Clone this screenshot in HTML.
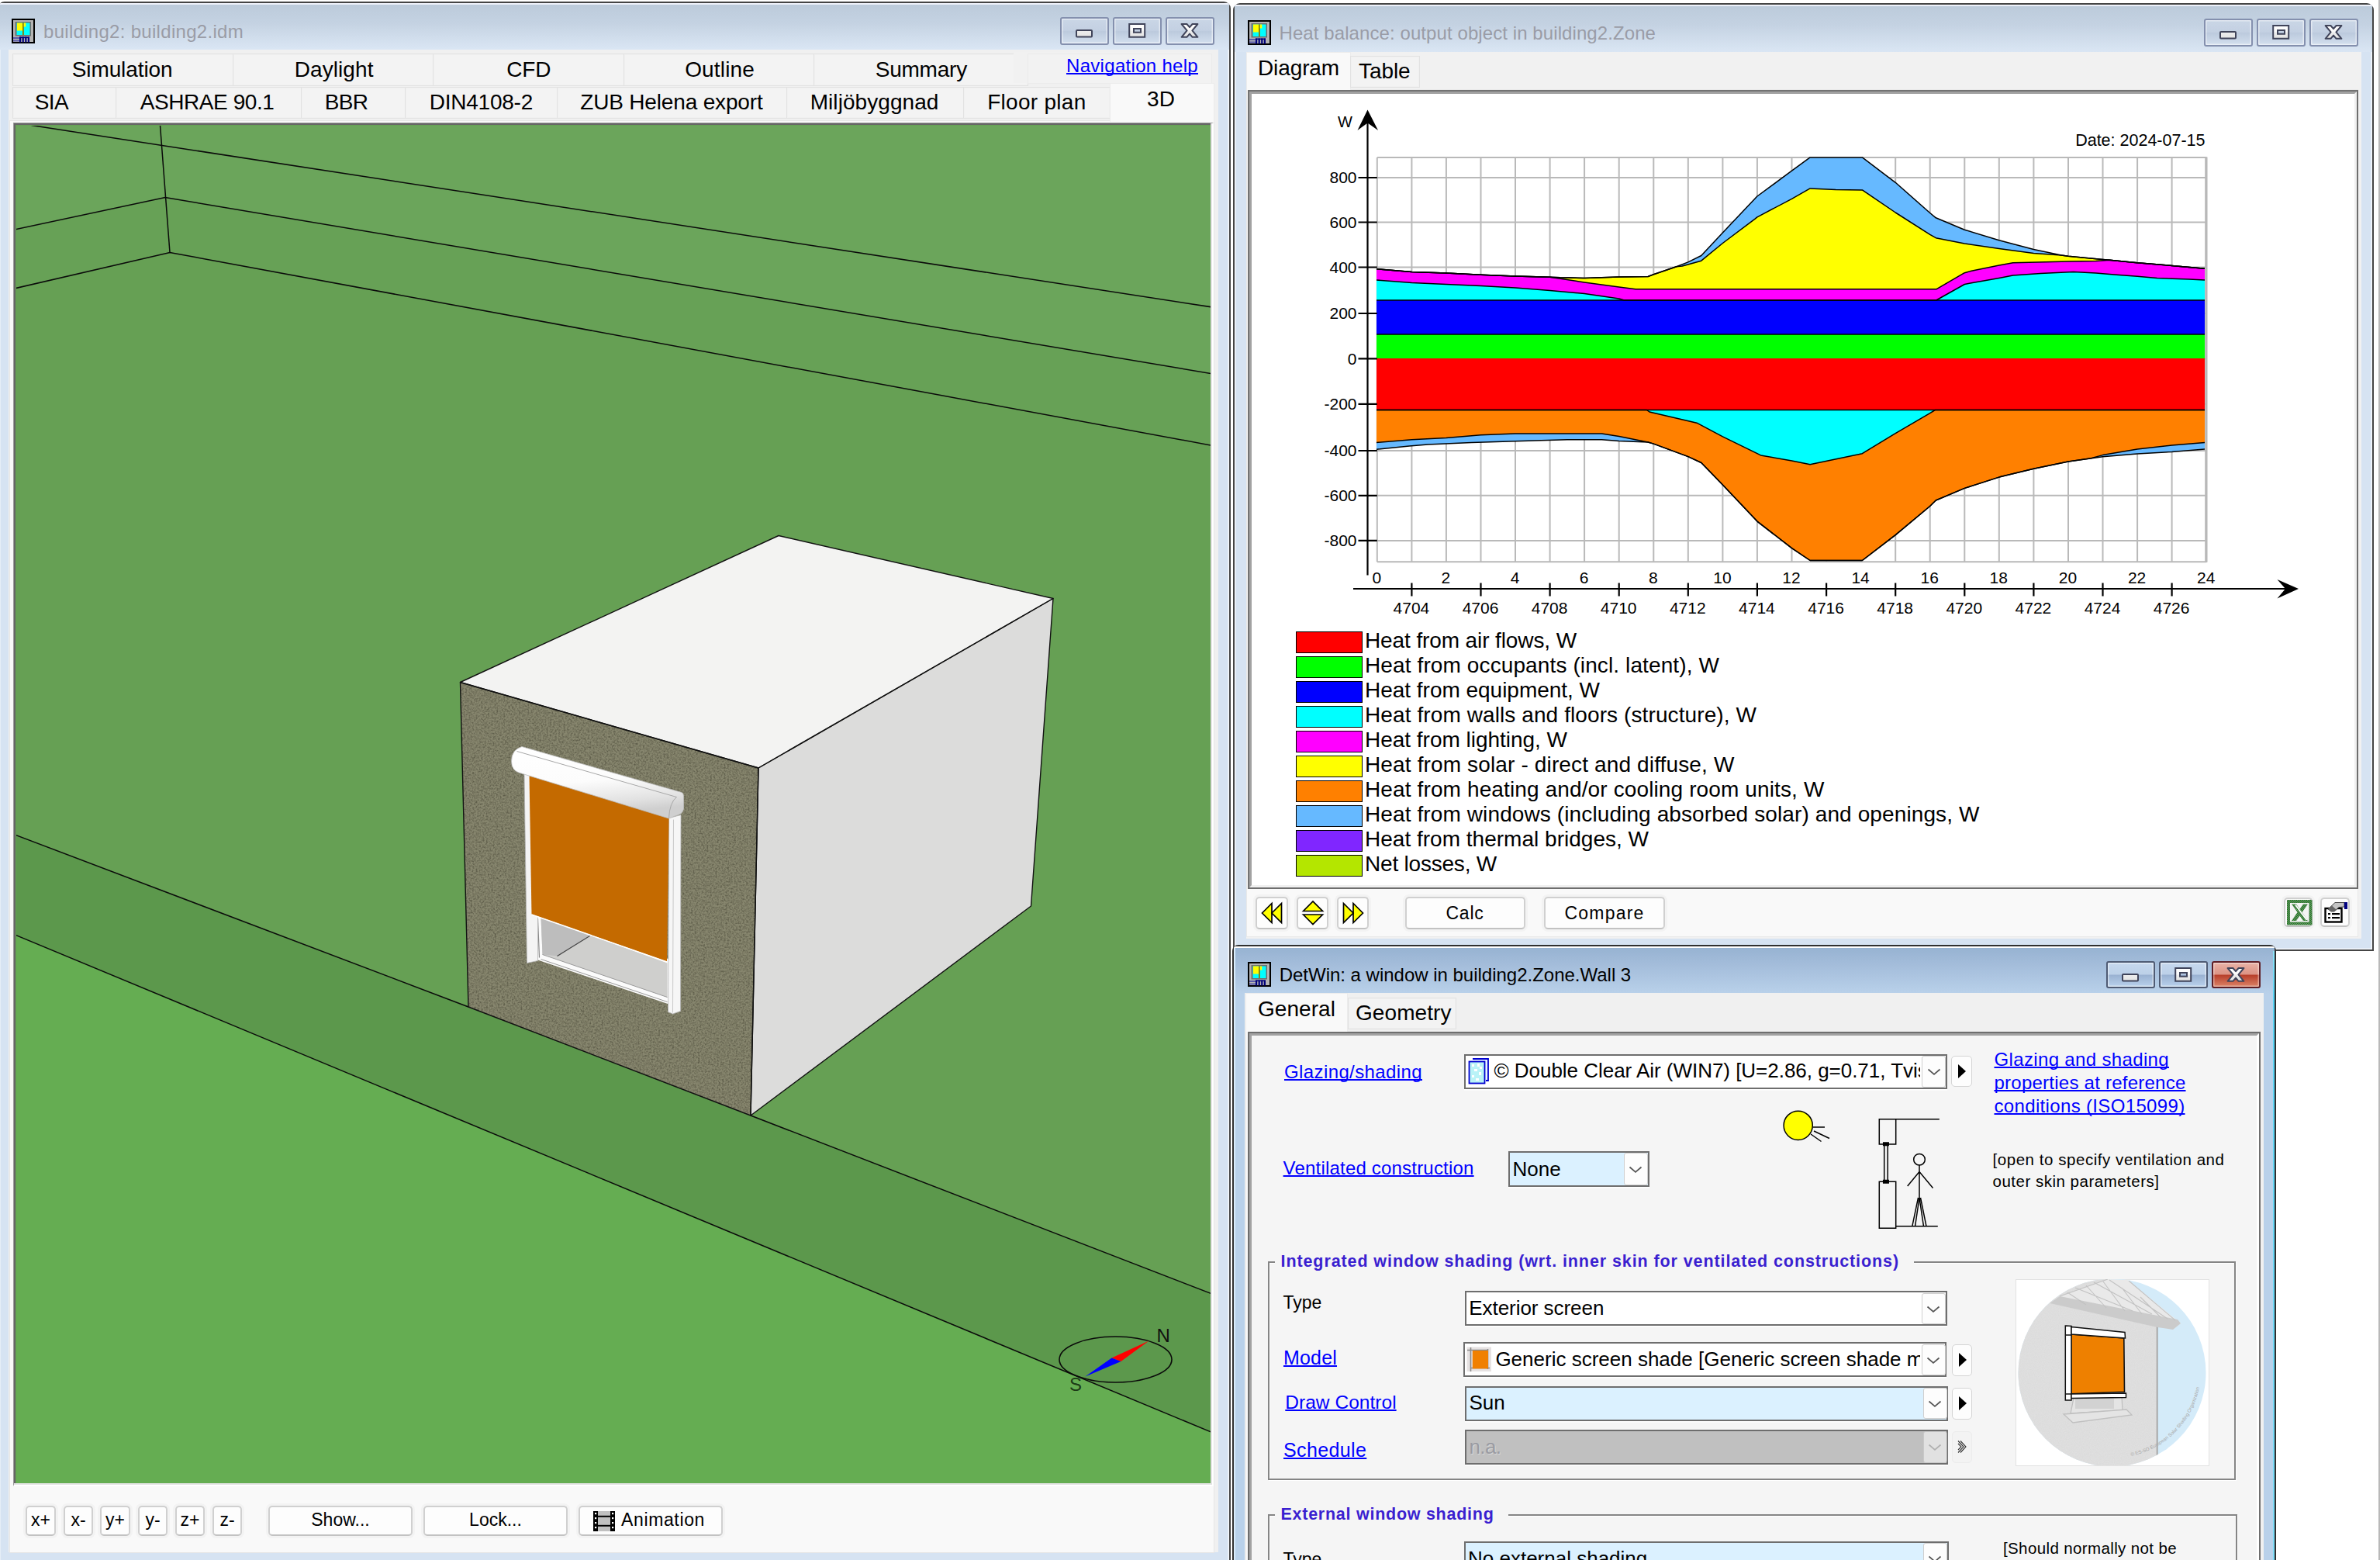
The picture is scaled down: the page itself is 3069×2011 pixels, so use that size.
<!DOCTYPE html>
<html lang="en"><head><meta charset="utf-8"><title>IDA ICE</title>
<style>

html,body{margin:0;padding:0;}
body{width:3069px;height:2011px;overflow:hidden;background:#fff;position:relative;font-family:"Liberation Sans",sans-serif;}
.t{position:absolute;white-space:nowrap;}
.abs{position:absolute;}
.win{position:absolute;box-sizing:border-box;border:2px solid #454545;}
.cap{position:absolute;box-sizing:border-box;width:63px;height:35.6px;border-radius:3px;border:2px solid #8490ae;
 background:linear-gradient(#cad6e6 0%,#c3d0e2 48%,#bccadd 52%,#d3dfee 100%);box-shadow:inset 0 0 0 1.5px rgba(255,255,255,.5);}
.capa{border-color:#4f5b74;background:linear-gradient(#c6d8ee 0%,#bcd0e8 47%,#9ab2d2 53%,#b9d1ec 100%);box-shadow:inset 0 0 0 1.5px rgba(255,255,255,.5);}
.capx{border-color:#5e1e25;background:linear-gradient(#e9b2a6 0%,#dc9485 47%,#b8402b 53%,#dc8367 100%);box-shadow:inset 0 0 0 1.5px rgba(255,255,255,.4);}
.tab{position:absolute;box-sizing:border-box;background:#f3f3f3;border:1px solid #e2e2e2;box-shadow:inset 0 0 0 1px #f0f0f0;}
.tabsel{position:absolute;box-sizing:border-box;background:#f9f9f9;border:1.5px solid #ececec;border-bottom:none;}
.btn{position:absolute;box-sizing:border-box;background:#fdfdfd;border:2px solid #d0d0d0;border-bottom-color:#c2c2c2;border-radius:5px;box-shadow:0 0 0 3px #f3f3f3;}
.sunk{position:absolute;box-sizing:border-box;border-style:solid;border-width:2px;border-color:#6b6b6b;}
.combo{position:absolute;box-sizing:border-box;border:2px solid #6e6e6e;background:#fff;overflow:hidden;}
.dd{position:absolute;box-sizing:border-box;background:#fdfdfd;border:1.5px solid #cfcfcf;border-radius:3px;}
.arrowbtn{position:absolute;box-sizing:border-box;background:#fdfdfd;border:1.5px solid #d4d4d4;border-radius:5px;}

</style></head>
<body>
<div class="abs" style="left:3067px;top:0;width:1.5px;height:2011px;background:#b9b9b9"></div>
<div class="win" style="left:-3px;top:2px;width:1590px;height:2030px;border-radius:9px 9px 0 0;background:#d6e3f2;box-shadow:inset 0 0 0 1.5px rgba(255,255,255,.75);"></div>
<div class="" style="position:absolute;left:-1px;top:4px;width:1586px;height:2px;background:#eef1fa;border-radius:6px 6px 0 0;"></div>
<div class="" style="position:absolute;left:-1px;top:6px;width:1586px;height:58px;background:linear-gradient(#bccbdb 0%,#c4d2e2 40%,#dae6f4 100%);"></div>
<div class="" style="position:absolute;left:11px;top:64px;width:1560px;height:1937px;background:#f0f0f0;"></div>
<div class="" style="position:absolute;left:12px;top:155px;width:1554px;height:1847px;box-sizing:border-box;background:#f9f9f9;border:1px solid #e6e6e6;"></div>
<svg class="abs" style="left:15px;top:24px" width="30" height="32" viewBox="0 0 30 32">
<rect x="0" y="0" width="30" height="32" fill="#000"/>
<rect x="2" y="2" width="26" height="28" fill="#b4b4b4"/>
<rect x="4.5" y="4" width="20.5" height="18.5" fill="#6e6e6e"/>
<rect x="6.5" y="5.5" width="17" height="15.5" fill="#00ffff"/>
<rect x="7" y="5.5" width="7" height="10" fill="#ffff00"/>
<rect x="14" y="5.5" width="1.8" height="15.5" fill="#8a7a00"/>
<rect x="15.8" y="5.5" width="2.5" height="5" fill="#ffff00"/>
<rect x="2" y="24" width="8" height="2" fill="#5a5aa8"/>
<rect x="2" y="27.5" width="8" height="2" fill="#5a5aa8"/>
<rect x="10" y="23.5" width="2.2" height="7" fill="#00007a"/>
<rect x="13.6" y="23.5" width="2.2" height="7" fill="#00007a"/>
<rect x="17.2" y="23.5" width="2.2" height="7" fill="#00007a"/>
<rect x="20.8" y="23.5" width="2.2" height="7" fill="#00007a"/>
<rect x="10" y="23.5" width="13" height="1.6" fill="#00007a"/>
</svg>
<div class="t " style="left:56.00px;top:29.28px;font-size:24px;line-height:24px;color:#9a9ca6;letter-spacing:0.298px;">building2: building2.idm</div>
<div class="cap" style="left:1367px;top:22px"></div>
<div class="cap" style="left:1435px;top:22px"></div>
<div class="cap" style="left:1503px;top:22px"></div>
<svg class="abs" style="left:1367px;top:22px" width="200" height="35" viewBox="0 0 200 35">
<defs><linearGradient id="gfill1" x1="0" y1="0" x2="0" y2="1" gradientUnits="userSpaceOnUse" gradientTransform="translate(0,8) scale(1,19)"><stop offset="0" stop-color="#ffffff"/><stop offset="0.45" stop-color="#fafafa"/><stop offset="0.55" stop-color="#ececec"/><stop offset="1" stop-color="#e2e2e2"/></linearGradient></defs>
<rect x="21" y="17" width="20" height="8.6" rx="1" fill="url(#gfill1)" stroke="#40445a" stroke-width="2"/>
<path d="M89.2 9h20v16.8h-20z M95 15v4.8h9v-4.8z" fill="url(#gfill1)" fill-rule="evenodd" stroke="#40445a" stroke-width="2" stroke-linejoin="miter"/>
<path d="M156.6 9h6.8l3.6 4.2 3.6-4.2h6.8l-7 8.4 7 8.4h-6.8l-3.6-4.2-3.6 4.2h-6.8l7-8.4z" fill="url(#gfill1)" stroke="#40445a" stroke-width="2" stroke-linejoin="round"/>
</svg>
<div class="tab" style="left:16px;top:69px;width:285.5px;height:41.5px"></div>
<div class="t " style="left:92.70px;top:76.30px;font-size:28px;line-height:28px;color:#000;letter-spacing:-0.093px;">Simulation</div>
<div class="tab" style="left:300px;top:69px;width:259.5px;height:41.5px"></div>
<div class="t " style="left:379.70px;top:76.30px;font-size:28px;line-height:28px;color:#000;letter-spacing:0.080px;">Daylight</div>
<div class="tab" style="left:558px;top:69px;width:247.5px;height:41.5px"></div>
<div class="t " style="left:653.20px;top:76.30px;font-size:28px;line-height:28px;color:#000;letter-spacing:-0.082px;">CFD</div>
<div class="tab" style="left:804px;top:69px;width:246.5px;height:41.5px"></div>
<div class="t " style="left:883.20px;top:76.30px;font-size:28px;line-height:28px;color:#000;letter-spacing:0.155px;">Outline</div>
<div class="tab" style="left:1049px;top:69px;width:276.5px;height:41.5px"></div>
<div class="t " style="left:1128.70px;top:76.30px;font-size:28px;line-height:28px;color:#000;letter-spacing:-0.213px;">Summary</div>
<div class="" style="position:absolute;left:1307px;top:67px;width:254px;height:40px;background:#f1f1f1;"></div>
<div class="" style="position:absolute;left:1325px;top:69px;width:238px;height:38.5px;background:#f2f2f2;border:1.5px solid #ebebeb;box-sizing:border-box;"></div>
<div class="t " style="left:1375.00px;top:72.98px;font-size:24px;line-height:24px;color:#0000ff;letter-spacing:0.304px;text-decoration:underline;text-decoration-skip-ink:none;text-decoration-thickness:2.0px;text-underline-offset:1.0px;">Navigation help</div>
<div class="tab" style="left:16px;top:111.5px;width:134.5px;height:41.0px"></div>
<div class="t " style="left:44.70px;top:118.30px;font-size:28px;line-height:28px;color:#000;letter-spacing:-0.610px;">SIA</div>
<div class="tab" style="left:149px;top:111.5px;width:240.5px;height:41.0px"></div>
<div class="t " style="left:180.70px;top:118.30px;font-size:28px;line-height:28px;color:#000;letter-spacing:-0.420px;">ASHRAE 90.1</div>
<div class="tab" style="left:388px;top:111.5px;width:135.5px;height:41.0px"></div>
<div class="t " style="left:418.70px;top:118.30px;font-size:28px;line-height:28px;color:#000;letter-spacing:-0.591px;">BBR</div>
<div class="tab" style="left:522px;top:111.5px;width:197.5px;height:41.0px"></div>
<div class="t " style="left:553.70px;top:118.30px;font-size:28px;line-height:28px;color:#000;letter-spacing:-0.234px;">DIN4108-2</div>
<div class="tab" style="left:718px;top:111.5px;width:297.5px;height:41.0px"></div>
<div class="t " style="left:748.20px;top:118.30px;font-size:28px;line-height:28px;color:#000;letter-spacing:-0.165px;">ZUB Helena export</div>
<div class="tab" style="left:1014px;top:111.5px;width:229.5px;height:41.0px"></div>
<div class="t " style="left:1044.70px;top:118.30px;font-size:28px;line-height:28px;color:#000;letter-spacing:0.067px;">Miljöbyggnad</div>
<div class="tab" style="left:1242px;top:111.5px;width:189.5px;height:41.0px"></div>
<div class="t " style="left:1273.20px;top:118.30px;font-size:28px;line-height:28px;color:#000;letter-spacing:0.279px;">Floor plan</div>
<div class="tabsel" style="left:1430.5px;top:106.5px;width:135.5px;height:50px"></div>
<div class="t " style="left:1479.10px;top:113.80px;font-size:28px;line-height:28px;color:#000;">3D</div>
<div class="" style="position:absolute;left:17px;top:158px;width:1548px;height:1758px;box-sizing:border-box;background:#fff;border-top:1px solid #9a9a9a;border-left:1px solid #9a9a9a;border-right:2px solid #fff;border-bottom:2px solid #fff;"></div>
<div class="" style="position:absolute;left:18px;top:159px;width:1545px;height:1755px;box-sizing:border-box;background:#e3e3e3;"></div>
<div class="" style="position:absolute;left:18px;top:159px;width:1543px;height:1753px;box-sizing:border-box;background:#66a054;border-top:2px solid #666;border-left:2px solid #666;"></div>
<svg class="abs" style="left:20.5px;top:161.5px" width="1540.5" height="1750.5" viewBox="20.5 161.5 1540.5 1750.5">
<defs><filter id="stucco" x="0" y="0" width="100%" height="100%" color-interpolation-filters="sRGB"><feTurbulence type="fractalNoise" baseFrequency="0.45" numOctaves="2" seed="7" result="n"/>
<feColorMatrix in="n" type="matrix" values="0 0 0 0 0.37  0 0 0 0 0.365  0 0 0 0 0.29  1.6 1.6 0 0 -1.35" result="m"/>
<feComposite in="m" in2="SourceGraphic" operator="in" result="mm"/><feMerge><feMergeNode in="SourceGraphic"/><feMergeNode in="mm"/></feMerge></filter>
<linearGradient id="cass" x1="0" y1="0" x2="0.22" y2="1"><stop offset="0" stop-color="#fff"/><stop offset="0.55" stop-color="#fcfcfc"/><stop offset="0.85" stop-color="#e2e2e2"/><stop offset="1" stop-color="#cfcfcf"/></linearGradient></defs>
<rect x="20.5" y="161.5" width="1540.5" height="1750.5" fill="#66a054"/>
<polygon points="20.5,161.5 1561.0,161.5 1561.0,481.0 212.5,254.0 20.5,295.0" fill="#6ba55b"/>
<polygon points="20.5,295.0 212.5,254.0 1561.0,481.0 1561.0,573.5 218.5,325.0 20.5,371.0" fill="#67a156"/>
<polygon points="20.5,1076.0 603.5,1297.5 967.5,1437.5 1561.0,1667.0 1561.0,1845.5 20.5,1205.0" fill="#5c984c"/>
<polygon points="20.5,1205.0 1561.0,1845.5 1561.0,1912.0 20.5,1912.0" fill="#65ad52"/>
<g stroke="#0a0a0a" stroke-width="1.5" fill="none">
<path d="M40,161 L1561,395.2"/>
<path d="M206,161 L218.5,325"/>
<path d="M20,295 L212.5,254 L1561,481"/>
<path d="M20,371 L218.5,325 L1561,573.5"/>
<path d="M20,1076 L603.5,1297.5 M967.5,1437.5 L1561,1667"/>
<path d="M20,1205 L1561,1845.5"/>
</g>
<polygon points="1003.5,690.0 1357.5,771.0 977.5,989.5 593.0,879.0" fill="#f3f3f2"/>
<polygon points="977.5,989.5 1357.5,771.0 1329.0,1167.5 967.5,1437.5" fill="#dcdcdb"/>
<polygon points="593.0,879.0 977.5,989.5 967.5,1437.5 603.5,1297.5" fill="#87866e" filter="url(#stucco)"/>
<g stroke="#111" stroke-width="1.4" fill="none" stroke-linejoin="round"><polygon points="1003.5,690.0 1357.5,771.0 977.5,989.5 593.0,879.0"/><polygon points="977.5,989.5 1357.5,771.0 1329.0,1167.5 967.5,1437.5"/><polygon points="593.0,879.0 977.5,989.5 967.5,1437.5 603.5,1297.5"/></g>
<polygon points="688.0,1172.0 862.0,1236.0 862.0,1294.0 690.0,1236.0" fill="#fbfbfb"/>
<polygon points="697.0,1182.0 860.0,1241.0 860.0,1285.0 699.0,1230.0" fill="#cfcfcd"/>
<polygon points="697.0,1182.0 760.0,1205.0 720.0,1232.0 699.0,1230.0" fill="#bdbdbd"/>
<path d="M718,1232 L760,1206" stroke="#444" stroke-width="1.2"/>
<path d="M699,1230 L860,1285 M697,1236 L860,1291" stroke="#9a9a9a" stroke-width="1" fill="none"/>
<path d="M693,1184 L695,1234" stroke="#888" stroke-width="1.2" fill="none"/>
<polygon points="675.5,997.0 683.0,999.0 686.0,1178.0 693.0,1181.0 693.0,1238.0 679.0,1241.0" fill="#f4f4f4" stroke="#b5b5b5" stroke-width="0.8"/>
<polygon points="862.0,1054.0 877.5,1050.0 877.0,1303.0 867.0,1306.5 861.0,1304.0" fill="#f6f6f6" stroke="#b5b5b5" stroke-width="0.8"/>
<path d="M868,1056 L867,1305" stroke="#c8c8c8" stroke-width="1"/>
<polygon points="682.0,998.5 862.0,1054.0 859.5,1239.0 685.0,1178.0" fill="#c46a00"/>
<path d="M685,1178.5 L859.5,1239.5" stroke="#fff" stroke-width="1.6"/>
<path d="M672.5,962 L878.5,1021 Q881,1022 881,1026 L881,1042 Q880,1048 874,1050 L862,1054.5 L668.5,995.5 Q659,992 659,981 Q659,966 672.5,962 Z" fill="url(#cass)" stroke="#bdbdbd" stroke-width="0.8"/>
<path d="M666,968 L872,1027" stroke="#a8a8a8" stroke-width="1" fill="none"/>
<path d="M872,1027 Q863,1034 862,1054" stroke="#a8a8a8" stroke-width="1" fill="none"/>
<ellipse cx="1438" cy="1752" rx="72.5" ry="29.5" fill="none" stroke="#0a0a0a" stroke-width="1.6"/>
<polygon points="1481,1728 1433,1750 1445,1754.5" fill="#ff0000"/>
<polygon points="1399,1774 1433,1750 1445,1754.5" fill="#0000ff"/>
<text x="1491" y="1729.5" font-family='"Liberation Sans",sans-serif' font-size="24" fill="#111">N</text>
<text x="1378.5" y="1792" font-family='"Liberation Sans",sans-serif' font-size="24" fill="#1c3a16">S</text>
</svg>
<div class="btn" style="left:33px;top:1941px;width:39px;height:38.5px"></div>
<div class="t " style="left:40.03px;top:1947.53px;font-size:23px;line-height:23px;color:#000;">x+</div>
<div class="btn" style="left:82px;top:1941px;width:38px;height:38.5px"></div>
<div class="t " style="left:91.42px;top:1947.53px;font-size:23px;line-height:23px;color:#000;">x-</div>
<div class="btn" style="left:129px;top:1941px;width:39px;height:38.5px"></div>
<div class="t " style="left:136.03px;top:1947.53px;font-size:23px;line-height:23px;color:#000;">y+</div>
<div class="btn" style="left:178px;top:1941px;width:38px;height:38.5px"></div>
<div class="t " style="left:187.42px;top:1947.53px;font-size:23px;line-height:23px;color:#000;">y-</div>
<div class="btn" style="left:226px;top:1941px;width:38px;height:38.5px"></div>
<div class="t " style="left:232.53px;top:1947.53px;font-size:23px;line-height:23px;color:#000;">z+</div>
<div class="btn" style="left:274px;top:1941px;width:38px;height:38.5px"></div>
<div class="t " style="left:283.42px;top:1947.53px;font-size:23px;line-height:23px;color:#000;">z-</div>
<div class="btn" style="left:346px;top:1941px;width:186px;height:38.5px"></div>
<div class="t " style="left:401.28px;top:1948.03px;font-size:23px;line-height:23px;color:#000;">Show...</div>
<div class="btn" style="left:546px;top:1941px;width:186px;height:38.5px"></div>
<div class="t " style="left:605.12px;top:1948.03px;font-size:23px;line-height:23px;color:#000;">Lock...</div>
<div class="btn" style="left:746px;top:1941px;width:186px;height:38.5px"></div>
<div class="t " style="left:801.00px;top:1948.03px;font-size:23px;line-height:23px;color:#000;letter-spacing:0.636px;">Animation</div>
<svg class="abs" style="left:765px;top:1948px" width="28" height="26" viewBox="0 0 28 26">
<rect x="0" y="0" width="28" height="26" fill="#c0c0c0"/>
<rect x="0" y="0" width="6" height="26" fill="#000"/><rect x="22" y="0" width="6" height="26" fill="#000"/>
<rect x="6" y="5.8" width="16" height="2" fill="#000"/><rect x="6" y="17.8" width="16" height="2" fill="#000"/>
<g fill="#fff"><rect x="2" y="2" width="2.2" height="2.2"/><rect x="2" y="8" width="2.2" height="2.2"/><rect x="2" y="14" width="2.2" height="2.2"/><rect x="2" y="20" width="2.2" height="2.2"/>
<rect x="24" y="2" width="2.2" height="2.2"/><rect x="24" y="8" width="2.2" height="2.2"/><rect x="24" y="14" width="2.2" height="2.2"/><rect x="24" y="20" width="2.2" height="2.2"/></g>
</svg>
<div class="win" style="left:1590px;top:4px;width:1471px;height:1222px;border-radius:9px 9px 0 0;background:#d6e3f2;box-shadow:inset 0 0 0 1.5px rgba(255,255,255,.75);"></div>
<div class="" style="position:absolute;left:1592px;top:6px;width:1467px;height:2px;background:#eef1fa;border-radius:6px 6px 0 0;"></div>
<div class="" style="position:absolute;left:1592px;top:8px;width:1467px;height:59px;background:linear-gradient(#bccbdb 0%,#c4d2e2 40%,#dae6f4 100%);"></div>
<div class="" style="position:absolute;left:1606.5px;top:67px;width:1438.5px;height:1143px;background:#f1f1f1;"></div>
<div class="" style="position:absolute;left:1607px;top:115px;width:1434px;height:1093px;box-sizing:border-box;background:#f9f9f9;border:1px solid #e9e9e9;"></div>
<svg class="abs" style="left:1609px;top:26px" width="30" height="32" viewBox="0 0 30 32">
<rect x="0" y="0" width="30" height="32" fill="#000"/>
<rect x="2" y="2" width="26" height="28" fill="#b4b4b4"/>
<rect x="4.5" y="4" width="20.5" height="18.5" fill="#6e6e6e"/>
<rect x="6.5" y="5.5" width="17" height="15.5" fill="#00ffff"/>
<rect x="7" y="5.5" width="7" height="10" fill="#ffff00"/>
<rect x="14" y="5.5" width="1.8" height="15.5" fill="#8a7a00"/>
<rect x="15.8" y="5.5" width="2.5" height="5" fill="#ffff00"/>
<rect x="2" y="24" width="8" height="2" fill="#5a5aa8"/>
<rect x="2" y="27.5" width="8" height="2" fill="#5a5aa8"/>
<rect x="10" y="23.5" width="2.2" height="7" fill="#00007a"/>
<rect x="13.6" y="23.5" width="2.2" height="7" fill="#00007a"/>
<rect x="17.2" y="23.5" width="2.2" height="7" fill="#00007a"/>
<rect x="20.8" y="23.5" width="2.2" height="7" fill="#00007a"/>
<rect x="10" y="23.5" width="13" height="1.6" fill="#00007a"/>
</svg>
<div class="t " style="left:1649.50px;top:31.28px;font-size:24px;line-height:24px;color:#9a9ca6;letter-spacing:0.085px;">Heat balance: output object in building2.Zone</div>
<div class="cap" style="left:2841.5px;top:24px"></div>
<div class="cap" style="left:2909.5px;top:24px"></div>
<div class="cap" style="left:2977.5px;top:24px"></div>
<svg class="abs" style="left:2841.5px;top:24px" width="200" height="35" viewBox="0 0 200 35">
<defs><linearGradient id="gfill2" x1="0" y1="0" x2="0" y2="1" gradientUnits="userSpaceOnUse" gradientTransform="translate(0,8) scale(1,19)"><stop offset="0" stop-color="#ffffff"/><stop offset="0.45" stop-color="#fafafa"/><stop offset="0.55" stop-color="#ececec"/><stop offset="1" stop-color="#e2e2e2"/></linearGradient></defs>
<rect x="21" y="17" width="20" height="8.6" rx="1" fill="url(#gfill2)" stroke="#40445a" stroke-width="2"/>
<path d="M89.2 9h20v16.8h-20z M95 15v4.8h9v-4.8z" fill="url(#gfill2)" fill-rule="evenodd" stroke="#40445a" stroke-width="2" stroke-linejoin="miter"/>
<path d="M156.6 9h6.8l3.6 4.2 3.6-4.2h6.8l-7 8.4 7 8.4h-6.8l-3.6-4.2-3.6 4.2h-6.8l7-8.4z" fill="url(#gfill2)" stroke="#40445a" stroke-width="2" stroke-linejoin="round"/>
</svg>
<div class="tabsel" style="left:1606.5px;top:67px;width:135px;height:50px"></div>
<div class="t " style="left:1622.00px;top:73.80px;font-size:28px;line-height:28px;color:#000;letter-spacing:-0.115px;">Diagram</div>
<div class="tab" style="left:1741px;top:72px;width:89.5px;height:41px"></div>
<div class="t " style="left:1752.00px;top:78.30px;font-size:28px;line-height:28px;color:#000;letter-spacing:-0.088px;">Table</div>
<div class="" style="position:absolute;left:1609px;top:116px;width:1432px;height:1030px;box-sizing:border-box;background:#fff;border:2px solid #6e6e6e;border-top-color:#727272;border-left-color:#727272;"></div>
<div class="" style="position:absolute;left:1611px;top:118px;width:1428px;height:1026px;box-sizing:border-box;background:#fff;border-top:3px solid #a2a2a2;border-left:3px solid #a2a2a2;border-right:3px solid #f0f0f0;border-bottom:3px solid #f0f0f0;"></div>
<svg class="abs" style="left:1615px;top:122px" width="1422" height="690" viewBox="1615 122 1422 690">
<path d="M1775.8,203.0 V724.3 M1820.4,203.0 V724.3 M1864.9,203.0 V724.3 M1909.5,203.0 V724.3 M1954.0,203.0 V724.3 M1998.6,203.0 V724.3 M2043.1,203.0 V724.3 M2087.7,203.0 V724.3 M2132.3,203.0 V724.3 M2176.8,203.0 V724.3 M2221.4,203.0 V724.3 M2265.9,203.0 V724.3 M2310.5,203.0 V724.3 M2355.1,203.0 V724.3 M2399.6,203.0 V724.3 M2444.2,203.0 V724.3 M2488.7,203.0 V724.3 M2533.3,203.0 V724.3 M2577.8,203.0 V724.3 M2622.4,203.0 V724.3 M2667.0,203.0 V724.3 M2711.5,203.0 V724.3 M2756.1,203.0 V724.3 M2800.6,203.0 V724.3 M2845.2,203.0 V724.3 M1775.8,696.9 H2845.2 M1775.8,638.8 H2845.2 M1775.8,581.0 H2845.2 M1775.8,520.8 H2845.2 M1775.8,462.4 H2845.2 M1775.8,404.0 H2845.2 M1775.8,344.5 H2845.2 M1775.8,286.5 H2845.2 M1775.8,229.0 H2845.2 M1775.8,203.0 H2845.2 M1775.8,724.3 H2845.2" stroke="#b9b9b9" stroke-width="2" fill="none"/>
<path d="M2844.7999999999997,202.2 V725.0999999999999" stroke="#b8b8b8" stroke-width="3.2" fill="none"/>
<polygon points="1775.0,462.0 2843.0,462.0 2843.0,528.5 1775.0,528.5" fill="#ff0000"/>
<polygon points="1775.0,431.0 2843.0,431.0 2843.0,462.0 1775.0,462.0" fill="#00ff00"/>
<polygon points="1775.0,387.0 2843.0,387.0 2843.0,431.0 1775.0,431.0" fill="#0000ff"/>
<polygon points="1775.0,361.0 1820.4,364.4 1864.9,366.6 1909.5,368.5 1954.0,371.0 1998.6,374.5 2043.1,378.5 2087.7,385.0 2094.4,387.0 2496.8,387.0 2533.3,366.5 2542.2,364.8 2577.8,358.4 2595.7,355.0 2631.3,352.5 2673.7,350.5 2702.6,352.0 2729.3,354.2 2756.1,356.2 2781.5,358.4 2822.9,360.0 2843.0,361.0 2843.0,387.0 2822.9,387.0 2781.5,387.0 2756.1,387.0 2729.3,387.0 2702.6,387.0 2673.7,387.0 2631.3,387.0 2595.7,387.0 2577.8,387.0 2542.2,387.0 2533.3,387.0 2496.8,387.0 2094.4,387.0 2087.7,387.0 2043.1,387.0 1998.6,387.0 1954.0,387.0 1909.5,387.0 1864.9,387.0 1820.4,387.0 1775.0,387.0" fill="#00ffff"/>
<polygon points="1775.0,346.8 1820.4,350.6 1864.9,352.0 1909.5,354.3 1954.0,356.0 1998.6,357.2 2043.1,364.0 2087.7,370.0 2094.4,370.9 2109.1,372.8 2496.8,372.8 2533.3,351.7 2542.2,349.2 2577.8,342.1 2595.7,338.7 2631.3,337.9 2668.7,337.0 2673.7,336.9 2702.6,336.6 2720.4,335.3 2729.3,336.1 2756.1,338.7 2781.5,340.8 2800.6,342.4 2822.9,344.4 2843.0,346.3 2843.0,361.0 2822.9,360.0 2800.6,359.1 2781.5,358.4 2756.1,356.2 2729.3,354.2 2720.4,353.5 2702.6,352.0 2673.7,350.5 2668.7,350.7 2631.3,352.5 2595.7,355.0 2577.8,358.4 2542.2,364.8 2533.3,366.5 2496.8,387.0 2109.1,387.0 2094.4,387.0 2087.7,385.0 2043.1,378.5 1998.6,374.5 1954.0,371.0 1909.5,368.5 1864.9,366.6 1820.4,364.4 1775.0,361.0" fill="#ff00ff"/>
<polygon points="1775.0,346.8 1820.4,350.6 1864.9,352.0 1909.5,354.3 1954.0,356.0 1998.6,357.2 2012.0,357.8 2043.1,358.4 2087.7,357.0 2109.1,356.7 2125.1,356.5 2132.3,353.8 2161.7,343.7 2169.3,343.0 2193.8,336.2 2221.4,313.5 2262.8,282.4 2265.9,279.9 2310.5,256.3 2334.1,242.9 2367.1,244.5 2401.4,244.9 2444.2,274.0 2488.7,302.4 2496.3,306.7 2496.8,306.8 2533.3,313.9 2542.2,315.2 2577.8,320.6 2595.7,323.0 2622.4,326.5 2658.1,329.0 2667.0,330.3 2668.7,330.5 2702.6,333.7 2711.5,334.5 2720.4,335.3 2756.1,338.7 2800.6,342.4 2843.0,346.3 2843.0,346.3 2800.6,342.4 2756.1,338.7 2720.4,335.3 2711.5,336.0 2702.6,336.6 2668.7,337.0 2667.0,337.0 2658.1,337.2 2622.4,338.1 2595.7,338.7 2577.8,342.1 2542.2,349.2 2533.3,351.7 2496.8,372.8 2496.3,372.8 2488.7,372.8 2444.2,372.8 2401.4,372.8 2367.1,372.8 2334.1,372.8 2310.5,372.8 2265.9,372.8 2262.8,372.8 2221.4,372.8 2193.8,372.8 2169.3,372.8 2161.7,372.8 2132.3,372.8 2125.1,372.8 2109.1,372.8 2087.7,370.0 2043.1,364.0 2012.0,359.2 1998.6,357.2 1954.0,356.0 1909.5,354.3 1864.9,352.0 1820.4,350.6 1775.0,346.8" fill="#ffff00"/>
<polygon points="1775.0,346.8 1820.4,350.6 1864.9,352.0 1909.5,354.3 1954.0,356.0 1998.6,357.2 2012.0,357.8 2043.1,358.4 2087.7,357.0 2125.1,356.5 2132.3,353.8 2161.7,343.7 2169.3,340.8 2176.8,337.9 2193.8,329.5 2221.4,300.0 2262.8,256.3 2265.9,253.0 2310.5,220.2 2334.1,202.9 2367.1,202.9 2401.4,202.9 2444.2,235.3 2488.7,274.5 2496.3,280.8 2533.3,296.2 2577.8,309.7 2622.4,321.4 2658.1,329.0 2667.0,330.3 2711.5,334.5 2720.4,335.3 2756.1,338.7 2800.6,342.4 2843.0,346.3 2843.0,346.3 2800.6,342.4 2756.1,338.7 2720.4,335.3 2711.5,334.5 2667.0,330.3 2658.1,329.0 2622.4,326.5 2577.8,320.6 2533.3,313.9 2496.3,306.7 2488.7,302.4 2444.2,274.0 2401.4,244.9 2367.1,244.5 2334.1,242.9 2310.5,256.3 2265.9,279.9 2262.8,282.4 2221.4,313.5 2193.8,336.2 2176.8,340.9 2169.3,343.0 2161.7,343.7 2132.3,353.8 2125.1,356.5 2087.7,357.0 2043.1,358.4 2012.0,357.8 1998.6,357.2 1954.0,356.0 1909.5,354.3 1864.9,352.0 1820.4,350.6 1775.0,346.8" fill="#66b9ff"/>
<polygon points="1775.0,528.5 2123.4,528.5 2126.9,528.5 2188.0,528.5 2221.4,528.5 2265.9,528.5 2270.4,528.5 2310.5,528.5 2334.1,528.5 2401.4,528.5 2444.2,528.5 2488.7,528.5 2495.4,528.5 2843.0,528.5 2843.0,528.5 2495.4,528.5 2488.7,532.6 2444.2,558.7 2401.4,584.7 2334.1,598.7 2310.5,594.0 2270.4,586.9 2265.9,584.7 2221.4,562.9 2188.0,545.2 2126.9,531.0 2123.4,528.5 1775.0,528.5" fill="#00ffff"/>
<polygon points="1775.0,528.5 1820.4,528.5 1864.9,528.5 1909.5,528.5 1954.0,528.5 2065.4,528.5 2087.7,528.5 2123.4,528.5 2125.1,529.8 2126.9,531.0 2132.3,532.2 2176.8,542.6 2188.0,545.2 2193.8,548.3 2221.4,562.9 2265.9,584.7 2270.4,586.9 2310.5,594.0 2334.1,598.7 2401.4,584.7 2444.2,558.7 2488.7,532.6 2495.4,528.5 2496.3,528.5 2533.3,528.5 2577.8,528.5 2622.4,528.5 2667.0,528.5 2696.4,528.5 2711.5,528.5 2756.1,528.5 2800.6,528.5 2843.0,528.5 2843.0,570.6 2800.6,574.0 2756.1,579.0 2711.5,586.6 2696.4,590.8 2667.0,595.0 2622.4,604.2 2577.8,615.1 2533.3,629.4 2496.3,645.0 2495.4,645.9 2488.7,652.5 2444.2,689.7 2401.4,722.5 2334.1,722.5 2310.5,706.6 2270.4,675.5 2265.9,672.1 2221.4,625.0 2193.8,596.5 2188.0,593.8 2176.8,588.6 2132.3,572.1 2126.9,570.5 2125.1,570.0 2123.4,569.6 2087.7,562.5 2065.4,559.0 1954.0,559.0 1909.5,560.8 1864.9,564.5 1820.4,566.7 1775.0,570.4" fill="#ff8000"/>
<polygon points="1775.0,570.4 1817.2,567.0 1820.4,566.7 1841.3,565.7 1864.9,564.5 1897.4,561.8 1909.5,560.8 1954.0,559.0 2020.9,559.0 2065.4,559.0 2087.7,562.5 2125.1,570.0 2132.3,572.1 2176.8,588.6 2193.8,596.5 2221.4,625.0 2265.9,672.1 2310.5,706.6 2334.1,722.5 2401.4,722.5 2444.2,689.7 2488.7,652.5 2496.3,645.0 2533.3,629.4 2577.8,615.1 2622.4,604.2 2667.0,595.0 2696.4,590.8 2711.5,586.6 2756.1,579.0 2800.6,574.0 2843.0,570.6 2843.0,579.0 2800.6,582.4 2756.1,584.9 2711.5,588.7 2696.4,590.8 2667.0,595.0 2622.4,604.2 2577.8,615.1 2533.3,629.4 2496.3,645.0 2488.7,652.5 2444.2,689.7 2401.4,722.5 2334.1,722.5 2310.5,706.6 2265.9,672.1 2221.4,625.0 2193.8,596.5 2176.8,588.6 2132.3,572.1 2125.1,570.0 2087.7,568.5 2065.4,566.7 2020.9,566.7 1954.0,568.7 1909.5,570.0 1897.4,570.4 1864.9,571.9 1841.3,573.0 1820.4,574.7 1817.2,575.0 1775.0,579.2" fill="#66b9ff"/>
<g stroke="#000" stroke-width="1.5" fill="none" stroke-linejoin="round">
<polyline points="1775.0,431.0 2843.0,431.0"/>
<polyline points="1775.0,387.0 2843.0,387.0"/>
<polyline points="1775.0,361.0 1820.4,364.4 1864.9,366.6 1909.5,368.5 1954.0,371.0 1998.6,374.5 2043.1,378.5 2087.7,385.0 2094.4,387.0 2496.8,387.0 2533.3,366.5 2542.2,364.8 2577.8,358.4 2595.7,355.0 2631.3,352.5 2673.7,350.5 2702.6,352.0 2729.3,354.2 2756.1,356.2 2781.5,358.4 2822.9,360.0 2843.0,361.0"/>
<polyline points="1775.0,346.8 1820.4,350.6 1864.9,352.0 1909.5,354.3 1954.0,356.0 1998.6,357.2 2043.1,364.0 2087.7,370.0 2109.1,372.8 2496.8,372.8 2533.3,351.7 2542.2,349.2 2577.8,342.1 2595.7,338.7 2668.7,337.0 2702.6,336.6 2720.4,335.3 2756.1,338.7 2800.6,342.4 2843.0,346.3"/>
<polyline points="1775.0,346.8 1820.4,350.6 1864.9,352.0 1909.5,354.3 1954.0,356.0 1998.6,357.2 2012.0,357.8 2043.1,358.4 2087.7,357.0 2125.1,356.5 2132.3,353.8 2161.7,343.7 2169.3,343.0 2193.8,336.2 2221.4,313.5 2262.8,282.4 2265.9,279.9 2310.5,256.3 2334.1,242.9 2367.1,244.5 2401.4,244.9 2444.2,274.0 2488.7,302.4 2496.3,306.7 2533.3,313.9 2577.8,320.6 2622.4,326.5 2658.1,329.0 2667.0,330.3 2711.5,334.5 2720.4,335.3 2756.1,338.7 2800.6,342.4 2843.0,346.3"/>
<polyline points="1775.0,346.8 1820.4,350.6 1864.9,352.0 1909.5,354.3 1954.0,356.0 1998.6,357.2 2012.0,357.8 2043.1,358.4 2087.7,357.0 2125.1,356.5 2132.3,353.8 2161.7,343.7 2176.8,337.9 2193.8,329.5 2221.4,300.0 2265.9,253.0 2310.5,220.2 2334.1,202.9 2401.4,202.9 2444.2,235.3 2488.7,274.5 2496.3,280.8 2533.3,296.2 2577.8,309.7 2622.4,321.4 2658.1,329.0 2667.0,330.3 2711.5,334.5 2720.4,335.3 2756.1,338.7 2800.6,342.4 2843.0,346.3"/>
<polyline points="1775.0,528.5 2843.0,528.5"/>
<polyline points="1775.0,528.5 2123.4,528.5 2126.9,531.0 2188.0,545.2 2221.4,562.9 2265.9,584.7 2270.4,586.9 2310.5,594.0 2334.1,598.7 2401.4,584.7 2444.2,558.7 2488.7,532.6 2495.4,528.5 2843.0,528.5"/>
<polyline points="1775.0,570.4 1820.4,566.7 1864.9,564.5 1909.5,560.8 1954.0,559.0 2065.4,559.0 2087.7,562.5 2125.1,570.0 2132.3,572.1 2176.8,588.6 2193.8,596.5 2221.4,625.0 2265.9,672.1 2310.5,706.6 2334.1,722.5 2401.4,722.5 2444.2,689.7 2488.7,652.5 2496.3,645.0 2533.3,629.4 2577.8,615.1 2622.4,604.2 2667.0,595.0 2696.4,590.8 2711.5,586.6 2756.1,579.0 2800.6,574.0 2843.0,570.6"/>
<polyline points="1775.0,579.2 1817.2,575.0 1841.3,573.0 1897.4,570.4 1954.0,568.7 2020.9,566.7 2065.4,566.7 2087.7,568.5 2125.1,570.0 2132.3,572.1 2176.8,588.6 2193.8,596.5 2221.4,625.0 2265.9,672.1 2310.5,706.6 2334.1,722.5 2401.4,722.5 2444.2,689.7 2488.7,652.5 2496.3,645.0 2533.3,629.4 2577.8,615.1 2622.4,604.2 2667.0,595.0 2711.5,588.7 2756.1,584.9 2800.6,582.4 2843.0,579.0"/>
</g>
<g stroke="#000" stroke-width="2.2" fill="none">
<path d="M1763.5,150 V741.5"/>
<path d="M1745,759 H2950"/>
<path d="M1751.5,696.9 H1775.8 M1751.5,638.8 H1775.8 M1751.5,581.0 H1775.8 M1751.5,520.8 H1775.8 M1751.5,462.4 H1775.8 M1751.5,404.0 H1775.8 M1751.5,344.5 H1775.8 M1751.5,286.5 H1775.8 M1751.5,229.0 H1775.8 M1820.4,751.5 V768.5 M1909.5,751.5 V768.5 M1998.6,751.5 V768.5 M2087.7,751.5 V768.5 M2176.8,751.5 V768.5 M2265.9,751.5 V768.5 M2355.1,751.5 V768.5 M2444.2,751.5 V768.5 M2533.3,751.5 V768.5 M2622.4,751.5 V768.5 M2711.5,751.5 V768.5 M2800.6,751.5 V768.5"/>
</g>
<polygon points="1763.5,141.5 1777,168 1763.5,158.5 1750.5,168" fill="#000"/>
<polygon points="2964,759 2936.5,747 2947,759 2936.5,771.5" fill="#000"/>
<g font-family='"Liberation Sans",sans-serif' font-size="21" fill="#000">
<text x="1749.5" y="704.1" text-anchor="end">-800</text>
<text x="1749.5" y="646.0" text-anchor="end">-600</text>
<text x="1749.5" y="588.2" text-anchor="end">-400</text>
<text x="1749.5" y="528.0" text-anchor="end">-200</text>
<text x="1749.5" y="469.6" text-anchor="end">0</text>
<text x="1749.5" y="411.2" text-anchor="end">200</text>
<text x="1749.5" y="351.7" text-anchor="end">400</text>
<text x="1749.5" y="293.7" text-anchor="end">600</text>
<text x="1749.5" y="236.2" text-anchor="end">800</text>
<text x="1775.3" y="752.3" text-anchor="middle">0</text>
<text x="1864.4" y="752.3" text-anchor="middle">2</text>
<text x="1953.5" y="752.3" text-anchor="middle">4</text>
<text x="2042.6" y="752.3" text-anchor="middle">6</text>
<text x="2131.8" y="752.3" text-anchor="middle">8</text>
<text x="2220.9" y="752.3" text-anchor="middle">10</text>
<text x="2310.0" y="752.3" text-anchor="middle">12</text>
<text x="2399.1" y="752.3" text-anchor="middle">14</text>
<text x="2488.2" y="752.3" text-anchor="middle">16</text>
<text x="2577.3" y="752.3" text-anchor="middle">18</text>
<text x="2666.5" y="752.3" text-anchor="middle">20</text>
<text x="2755.6" y="752.3" text-anchor="middle">22</text>
<text x="2844.7" y="752.3" text-anchor="middle">24</text>
<text x="1819.9" y="791.3" text-anchor="middle">4704</text>
<text x="1909.0" y="791.3" text-anchor="middle">4706</text>
<text x="1998.1" y="791.3" text-anchor="middle">4708</text>
<text x="2087.2" y="791.3" text-anchor="middle">4710</text>
<text x="2176.3" y="791.3" text-anchor="middle">4712</text>
<text x="2265.4" y="791.3" text-anchor="middle">4714</text>
<text x="2354.6" y="791.3" text-anchor="middle">4716</text>
<text x="2443.7" y="791.3" text-anchor="middle">4718</text>
<text x="2532.8" y="791.3" text-anchor="middle">4720</text>
<text x="2621.9" y="791.3" text-anchor="middle">4722</text>
<text x="2711.0" y="791.3" text-anchor="middle">4724</text>
<text x="2800.1" y="791.3" text-anchor="middle">4726</text>
<text x="1725" y="164" font-size="20">W</text>
<text x="2843.5" y="188" text-anchor="end" font-size="21.5">Date: 2024-07-15</text>
</g>
</svg>
<div class="" style="position:absolute;left:1671px;top:814px;width:85.5px;height:27.5px;box-sizing:border-box;background:#ff0000;border:1.8px solid #000;"></div>
<div class="t " style="left:1760.00px;top:812.30px;font-size:28px;line-height:28px;color:#000;letter-spacing:-0.108px;">Heat from air flows, W</div>
<div class="" style="position:absolute;left:1671px;top:846px;width:85.5px;height:27.5px;box-sizing:border-box;background:#00ff00;border:1.8px solid #000;"></div>
<div class="t " style="left:1760.00px;top:844.30px;font-size:28px;line-height:28px;color:#000;letter-spacing:0.113px;">Heat from occupants (incl. latent), W</div>
<div class="" style="position:absolute;left:1671px;top:878px;width:85.5px;height:27.5px;box-sizing:border-box;background:#0000ff;border:1.8px solid #000;"></div>
<div class="t " style="left:1760.00px;top:876.30px;font-size:28px;line-height:28px;color:#000;letter-spacing:-0.020px;">Heat from equipment, W</div>
<div class="" style="position:absolute;left:1671px;top:910px;width:85.5px;height:27.5px;box-sizing:border-box;background:#00ffff;border:1.8px solid #000;"></div>
<div class="t " style="left:1760.00px;top:908.30px;font-size:28px;line-height:28px;color:#000;letter-spacing:0.097px;">Heat from walls and floors (structure), W</div>
<div class="" style="position:absolute;left:1671px;top:942px;width:85.5px;height:27.5px;box-sizing:border-box;background:#ff00ff;border:1.8px solid #000;"></div>
<div class="t " style="left:1760.00px;top:940.30px;font-size:28px;line-height:28px;color:#000;letter-spacing:-0.020px;">Heat from lighting, W</div>
<div class="" style="position:absolute;left:1671px;top:974px;width:85.5px;height:27.5px;box-sizing:border-box;background:#ffff00;border:1.8px solid #000;"></div>
<div class="t " style="left:1760.00px;top:972.30px;font-size:28px;line-height:28px;color:#000;letter-spacing:0.141px;">Heat from solar - direct and diffuse, W</div>
<div class="" style="position:absolute;left:1671px;top:1006px;width:85.5px;height:27.5px;box-sizing:border-box;background:#ff8000;border:1.8px solid #000;"></div>
<div class="t " style="left:1760.00px;top:1004.30px;font-size:28px;line-height:28px;color:#000;letter-spacing:0.125px;">Heat from heating and/or cooling room units, W</div>
<div class="" style="position:absolute;left:1671px;top:1038px;width:85.5px;height:27.5px;box-sizing:border-box;background:#66b9ff;border:1.8px solid #000;"></div>
<div class="t " style="left:1760.00px;top:1036.30px;font-size:28px;line-height:28px;color:#000;letter-spacing:0.109px;">Heat from windows (including absorbed solar) and openings, W</div>
<div class="" style="position:absolute;left:1671px;top:1070px;width:85.5px;height:27.5px;box-sizing:border-box;background:#8026ff;border:1.8px solid #000;"></div>
<div class="t " style="left:1760.00px;top:1068.30px;font-size:28px;line-height:28px;color:#000;letter-spacing:0.012px;">Heat from thermal bridges, W</div>
<div class="" style="position:absolute;left:1671px;top:1102px;width:85.5px;height:27.5px;box-sizing:border-box;background:#b4e600;border:1.8px solid #000;"></div>
<div class="t " style="left:1760.00px;top:1100.30px;font-size:28px;line-height:28px;color:#000;letter-spacing:-0.208px;">Net losses, W</div>
<div class="btn" style="left:1619px;top:1156px;width:41.5px;height:41.5px"></div>
<svg class="abs" style="left:1619px;top:1156px" width="42" height="42" viewBox="0 0 42 42"><g fill="#ffff00" stroke="#000" stroke-width="1.7" stroke-linejoin="miter"><polygon points="8.5,21 21,8.5 21,33.5"/><polygon points="21,21 33.5,8.5 33.5,33.5"/></g></svg>
<div class="btn" style="left:1671.5px;top:1156px;width:41.5px;height:41.5px"></div>
<svg class="abs" style="left:1671.5px;top:1156px" width="42" height="42" viewBox="0 0 42 42"><g fill="#ffff00" stroke="#000" stroke-width="1.7" stroke-linejoin="miter"><polygon points="8.5,18.5 21,6 33.5,18.5"/><polygon points="8.5,23 21,35.5 33.5,23"/></g></svg>
<div class="btn" style="left:1723.5px;top:1156px;width:41.5px;height:41.5px"></div>
<svg class="abs" style="left:1723.5px;top:1156px" width="42" height="42" viewBox="0 0 42 42"><g fill="#ffff00" stroke="#000" stroke-width="1.7" stroke-linejoin="miter"><polygon points="33.5,21 21,8.5 21,33.5"/><polygon points="21,21 8.5,8.5 8.5,33.5"/></g></svg>
<div class="btn" style="left:1811.5px;top:1156px;width:155px;height:41.5px"></div>
<div class="t " style="left:1864.50px;top:1165.53px;font-size:23px;line-height:23px;color:#000;letter-spacing:0.747px;">Calc</div>
<div class="btn" style="left:1991px;top:1156px;width:156px;height:41.5px"></div>
<div class="t " style="left:2017.50px;top:1165.53px;font-size:23px;line-height:23px;color:#000;letter-spacing:1.201px;">Compare</div>
<div class="btn" style="left:2944.5px;top:1156.5px;width:37.5px;height:38.5px"></div>
<div class="btn" style="left:2992px;top:1156.5px;width:37.5px;height:38.5px"></div>
<svg class="abs" style="left:2948.5px;top:1160px" width="33" height="33" viewBox="0 0 33 33">
<defs><pattern id="chk" width="2.6" height="2.6" patternUnits="userSpaceOnUse"><rect width="2.6" height="2.6" fill="#008000"/><rect width="1.3" height="1.3" fill="#8c8c8c"/><rect x="1.3" y="1.3" width="1.3" height="1.3" fill="#8c8c8c"/></pattern></defs>
<rect x="0" y="0" width="32.5" height="32.5" fill="url(#chk)"/>
<rect x="4" y="4" width="24.5" height="24.5" fill="#f4f4f4"/>
<path d="M6,5.5 L12,5.5 L16.5,12 L21,5.5 L27,5.5 L19.5,16 L27,27 L21,27 L16.5,20.5 L12,27 L6,27 L13.5,16 Z" fill="url(#chk)"/>
<path d="M11,6.5 L25.5,26" stroke="#fff" stroke-width="1.8"/>
</svg>
<svg class="abs" style="left:2996px;top:1160px" width="34" height="33" viewBox="0 0 34 33">
<rect x="2.5" y="11" width="21" height="17.5" fill="#fff" stroke="#000" stroke-width="2.4"/>
<rect x="6" y="17" width="3" height="2.2" fill="#000"/><rect x="11" y="17" width="10" height="2.2" fill="#000"/>
<rect x="6" y="22" width="3" height="2.2" fill="#000"/><rect x="11" y="22" width="10" height="2.2" fill="#000"/>
<path d="M6,12 L15,3.5 L27,3.5 L27,9 L20,9.5 L14,15 L10,15 Z" fill="#c4c4c4" stroke="#444" stroke-width="1"/>
<path d="M6,12 L11,7.5 L17,13 L14,15 L10,15 Z" fill="#666"/>
<rect x="27" y="3" width="4" height="9" fill="#000080"/>
</svg>
<div class="win" style="left:1589px;top:1218px;width:1346px;height:821px;border-radius:8px 8px 0 0;border-color:#303030;background:#b9d1ea;box-shadow:inset 0 0 0 1.5px rgba(235,248,255,.8);"></div>
<div class="" style="position:absolute;left:1591px;top:1220px;width:1342px;height:2px;background:#fff;border-radius:5px 5px 0 0;"></div>
<div class="" style="position:absolute;left:1591px;top:1222px;width:1342px;height:58.5px;background:linear-gradient(#97b3d2 0%,#a3bcda 35%,#b9d1ea 100%);"></div>
<div class="" style="position:absolute;left:1591px;top:1222px;width:1.5px;height:800px;background:#d9ecfa;"></div>
<div class="" style="position:absolute;left:2931px;top:1226px;width:2px;height:800px;background:linear-gradient(#8fe4fb,#55d4f6 60px,#7fdcf8);"></div>
<div class="" style="position:absolute;left:1605px;top:1280px;width:1314px;height:760px;background:#f0f0f0;"></div>
<div class="" style="position:absolute;left:1606px;top:1329px;width:1309px;height:720px;box-sizing:border-box;background:#f9f9f9;border:1px solid #e9e9e9;"></div>
<svg class="abs" style="left:1609px;top:1240px" width="30" height="32" viewBox="0 0 30 32">
<rect x="0" y="0" width="30" height="32" fill="#000"/>
<rect x="2" y="2" width="26" height="28" fill="#b4b4b4"/>
<rect x="4.5" y="4" width="20.5" height="18.5" fill="#6e6e6e"/>
<rect x="6.5" y="5.5" width="17" height="15.5" fill="#00ffff"/>
<rect x="7" y="5.5" width="7" height="10" fill="#ffff00"/>
<rect x="14" y="5.5" width="1.8" height="15.5" fill="#8a7a00"/>
<rect x="15.8" y="5.5" width="2.5" height="5" fill="#ffff00"/>
<rect x="2" y="24" width="8" height="2" fill="#5a5aa8"/>
<rect x="2" y="27.5" width="8" height="2" fill="#5a5aa8"/>
<rect x="10" y="23.5" width="2.2" height="7" fill="#00007a"/>
<rect x="13.6" y="23.5" width="2.2" height="7" fill="#00007a"/>
<rect x="17.2" y="23.5" width="2.2" height="7" fill="#00007a"/>
<rect x="20.8" y="23.5" width="2.2" height="7" fill="#00007a"/>
<rect x="10" y="23.5" width="13" height="1.6" fill="#00007a"/>
</svg>
<div class="t " style="left:1649.70px;top:1244.98px;font-size:24px;line-height:24px;color:#000;letter-spacing:-0.012px;">DetWin: a window in building2.Zone.Wall 3</div>
<div class="cap capa" style="left:2715.5px;top:1238.5px"></div>
<div class="cap capa" style="left:2783.5px;top:1238.5px"></div>
<div class="cap capx" style="left:2851.5px;top:1238.5px"></div>
<svg class="abs" style="left:2715.5px;top:1238.5px" width="200" height="35" viewBox="0 0 200 35">
<defs><linearGradient id="gfill3" x1="0" y1="0" x2="0" y2="1" gradientUnits="userSpaceOnUse" gradientTransform="translate(0,8) scale(1,19)"><stop offset="0" stop-color="#ffffff"/><stop offset="0.45" stop-color="#fafafa"/><stop offset="0.55" stop-color="#ececec"/><stop offset="1" stop-color="#e2e2e2"/></linearGradient></defs>
<rect x="21" y="17" width="20" height="8.6" rx="1" fill="url(#gfill3)" stroke="#40445a" stroke-width="2"/>
<path d="M89.2 9h20v16.8h-20z M95 15v4.8h9v-4.8z" fill="url(#gfill3)" fill-rule="evenodd" stroke="#40445a" stroke-width="2" stroke-linejoin="miter"/>
<path d="M156.6 9h6.8l3.6 4.2 3.6-4.2h6.8l-7 8.4 7 8.4h-6.8l-3.6-4.2-3.6 4.2h-6.8l7-8.4z" fill="url(#gfill3)" stroke="#40445a" stroke-width="2" stroke-linejoin="round"/>
</svg>
<div class="tabsel" style="left:1605.5px;top:1280px;width:132.5px;height:51px"></div>
<div class="t " style="left:1622.00px;top:1287.30px;font-size:28px;line-height:28px;color:#000;letter-spacing:0.055px;">General</div>
<div class="tab" style="left:1738px;top:1285.5px;width:140px;height:41px"></div>
<div class="t " style="left:1748.00px;top:1291.60px;font-size:28px;line-height:28px;color:#000;letter-spacing:0.072px;">Geometry</div>
<div class="" style="position:absolute;left:1609px;top:1330px;width:1306px;height:720px;box-sizing:border-box;background:#f5f5f5;border:2px solid #6e6e6e;"></div>
<div class="" style="position:absolute;left:1611px;top:1332px;width:1302px;height:720px;box-sizing:border-box;background:#f5f5f5;border-top:3px solid #a2a2a2;border-left:3px solid #a2a2a2;border-right:3px solid #fff;"></div>
<div class="t " style="left:1656.00px;top:1369.68px;font-size:24px;line-height:24px;color:#0000ff;letter-spacing:0.392px;text-decoration:underline;text-decoration-skip-ink:none;text-decoration-thickness:2.0px;text-underline-offset:1.0px;">Glazing/shading</div>
<div class="combo" style="left:1887.5px;top:1358.5px;width:623.5px;height:45.5px;background:#fff;box-shadow:0 1.5px 0 #fff;"></div>
<div class="dd" style="left:2478px;top:1360.7px;width:31px;height:41.1px;"></div>
<svg class="abs" style="left:2483.5px;top:1376.25px" width="20" height="12" viewBox="0 0 20 12"><path d="M2.5,2.5 L10,9 L17.5,2.5" fill="none" stroke="#555" stroke-width="1.7"/></svg>
<svg class="abs" style="left:1892px;top:1363px" width="30" height="36" viewBox="0 0 30 36">
<path d="M7,2 H27 V30 H24" fill="#eaf6ff" stroke="#0000d0" stroke-width="1.8"/>
<rect x="2.5" y="5.5" width="20" height="28" fill="#b9f3f7" stroke="#0000d0" stroke-width="1.8"/>
<g fill="#ffffff"><rect x="6" y="9" width="3" height="3"/><rect x="13" y="8" width="3" height="4"/><rect x="9" y="15" width="4" height="3"/><rect x="15" y="19" width="3" height="4"/><rect x="6" y="23" width="3" height="3"/><rect x="11" y="27" width="4" height="3"/><rect x="16" y="12" width="3" height="3"/></g>
</svg>
<div class="abs" style="left:1925px;top:1362px;width:551px;height:38px;overflow:hidden;"><div class="t" style="left:1.5px;top:5.39px;font-size:26px;line-height:26px;letter-spacing:-0.03px">© Double Clear Air (WIN7) [U=2.86, g=0.71, Tvis=0.81]</div></div>
<div class="arrowbtn" style="left:2515.5px;top:1361px;width:27.0px;height:40px"></div>
<svg class="abs" style="left:2524.0px;top:1371.0px" width="12" height="20" viewBox="0 0 12 20"><polygon points="1,1 11,10 1,19" fill="#000"/></svg>
<div class="t " style="left:2571.50px;top:1354.18px;font-size:24px;line-height:24px;color:#0000ff;letter-spacing:0.351px;text-decoration:underline;text-decoration-skip-ink:none;text-decoration-thickness:2.0px;text-underline-offset:1.0px;">Glazing and shading</div>
<div class="t " style="left:2571.50px;top:1384.18px;font-size:24px;line-height:24px;color:#0000ff;letter-spacing:0.241px;text-decoration:underline;text-decoration-skip-ink:none;text-decoration-thickness:2.0px;text-underline-offset:1.0px;">properties at reference</div>
<div class="t " style="left:2571.50px;top:1414.18px;font-size:24px;line-height:24px;color:#0000ff;letter-spacing:0.343px;text-decoration:underline;text-decoration-skip-ink:none;text-decoration-thickness:2.0px;text-underline-offset:1.0px;">conditions (ISO15099)</div>
<svg class="abs" style="left:2295px;top:1425px" width="215" height="165" viewBox="2295 1425 215 165">
<g fill="none" stroke="#000" stroke-width="1.5">
<circle cx="2318.7" cy="1450.8" r="18.6" fill="#ffff00"/>
<path d="M2337.5,1453 H2353 M2339,1458 L2359,1467.5 M2335,1462 L2348.5,1471.5"/>
<path d="M2500.8,1442.8 H2423.3 V1475 H2444.7 V1442.8"/>
<path d="M2429.7,1475 V1523.3 M2434.2,1475 V1523.3"/>
<rect x="2428.7" y="1473" width="6.5" height="3.5" fill="#000"/><rect x="2428.7" y="1521.5" width="6.5" height="3.5" fill="#000"/>
<path d="M2423.3,1523.3 H2444.7 V1583.3 H2423.3 Z"/>
<path d="M2444.7,1580.8 H2498.8"/>
<circle cx="2475" cy="1494.7" r="7.3"/>
<path d="M2475,1502 V1544 M2475,1510.5 L2459.7,1529 M2475,1510.5 L2492.5,1531.5 M2473.5,1544 L2465.8,1580.8 M2476.5,1544 L2484,1580.8 M2475,1544 L2469.5,1580.8 M2475,1544 L2480.5,1580.8"/>
</g></svg>
<div class="t " style="left:1654.60px;top:1493.98px;font-size:24px;line-height:24px;color:#0000ff;letter-spacing:0.196px;text-decoration:underline;text-decoration-skip-ink:none;text-decoration-thickness:2.0px;text-underline-offset:1.0px;">Ventilated construction</div>
<div class="combo" style="left:1945px;top:1484px;width:181.5px;height:46px;background:#dbf1ff;box-shadow:0 1.5px 0 #fff;"></div>
<div class="dd" style="left:2093.5px;top:1486.2px;width:31px;height:41.6px;"></div>
<svg class="abs" style="left:2099.0px;top:1502.0px" width="20" height="12" viewBox="0 0 20 12"><path d="M2.5,2.5 L10,9 L17.5,2.5" fill="none" stroke="#555" stroke-width="1.7"/></svg>
<div class="t " style="left:1950.50px;top:1493.79px;font-size:26px;line-height:26px;color:#000;">None</div>
<div class="t " style="left:2569.50px;top:1484.65px;font-size:20.5px;line-height:20.5px;color:#000;letter-spacing:0.547px;">[open to specify ventilation and</div>
<div class="t " style="left:2569.50px;top:1512.65px;font-size:20.5px;line-height:20.5px;color:#000;letter-spacing:0.502px;">outer skin parameters]</div>
<div class="abs" style="left:1635px;top:1626.3px;width:1248px;height:281.70000000000005px;box-sizing:border-box;border:2px solid #858585;box-shadow:1px 1px 0 #fff, inset 1px 1px 0 #fff;"></div>
<div class="abs" style="left:1644px;top:1614.3px;width:823.5px;height:24px;background:#f5f5f5"></div>
<div class="t " style="left:1651.50px;top:1615.80px;font-size:21.5px;line-height:21.5px;color:#3a1fd0;font-weight:bold;letter-spacing:0.906px;">Integrated window shading (wrt. inner skin for ventilated constructions)</div>
<div class="t " style="left:1654.60px;top:1668.33px;font-size:23px;line-height:23px;color:#000;letter-spacing:-0.091px;">Type</div>
<div class="combo" style="left:1889px;top:1664.4px;width:621.5px;height:44.899999999999864px;background:#fff;box-shadow:0 1.5px 0 #fff;"></div>
<div class="dd" style="left:2477.5px;top:1666.6000000000001px;width:31px;height:40.499999999999865px;"></div>
<svg class="abs" style="left:2483.0px;top:1681.85px" width="20" height="12" viewBox="0 0 20 12"><path d="M2.5,2.5 L10,9 L17.5,2.5" fill="none" stroke="#555" stroke-width="1.7"/></svg>
<div class="t " style="left:1894.30px;top:1673.49px;font-size:26px;line-height:26px;color:#000;letter-spacing:-0.056px;">Exterior screen</div>
<div class="t " style="left:1655.00px;top:1738.24px;font-size:25px;line-height:25px;color:#0000ff;letter-spacing:0.182px;text-decoration:underline;text-decoration-skip-ink:none;text-decoration-thickness:2.0px;text-underline-offset:1.0px;">Model</div>
<div class="combo" style="left:1887.2px;top:1730.4px;width:623.3px;height:44.899999999999864px;background:#fff;box-shadow:0 1.5px 0 #fff;"></div>
<div class="dd" style="left:2477.5px;top:1732.6000000000001px;width:31px;height:40.499999999999865px;"></div>
<svg class="abs" style="left:2483.0px;top:1747.85px" width="20" height="12" viewBox="0 0 20 12"><path d="M2.5,2.5 L10,9 L17.5,2.5" fill="none" stroke="#555" stroke-width="1.7"/></svg>
<svg class="abs" style="left:1891px;top:1735.5px" width="33" height="33" viewBox="0 0 33 33">
<rect x="0.5" y="0.5" width="31.5" height="31.5" fill="#e6e2e2"/>
<path d="M5.5,1 V32 M1,4.5 H27 M27.5,3 V29 M5.5,27.5 H30" stroke="#8a8a8a" stroke-width="1.6" fill="none"/>
<rect x="7.8" y="5" width="20.2" height="23.4" fill="#f08000"/>
</svg>
<div class="abs" style="left:1926px;top:1734px;width:550px;height:38px;overflow:hidden;"><div class="t" style="left:2.4px;top:4.99px;font-size:26px;line-height:26px;">Generic screen shade [Generic screen shade material]</div></div>
<div class="arrowbtn" style="left:2516.5px;top:1732.5px;width:26.0px;height:41.0px"></div>
<svg class="abs" style="left:2524.5px;top:1743.0px" width="12" height="20" viewBox="0 0 12 20"><polygon points="1,1 11,10 1,19" fill="#000"/></svg>
<div class="t " style="left:1657.30px;top:1796.06px;font-size:24.5px;line-height:24.5px;color:#0000ff;letter-spacing:0.029px;text-decoration:underline;text-decoration-skip-ink:none;text-decoration-thickness:2.0px;text-underline-offset:1.0px;">Draw Control</div>
<div class="combo" style="left:1889.2px;top:1786.6px;width:623.3px;height:45.0px;background:#dbf1ff;box-shadow:0 1.5px 0 #fff;"></div>
<div class="dd" style="left:2479.5px;top:1788.8px;width:31px;height:40.6px;"></div>
<svg class="abs" style="left:2485.0px;top:1804.1px" width="20" height="12" viewBox="0 0 20 12"><path d="M2.5,2.5 L10,9 L17.5,2.5" fill="none" stroke="#555" stroke-width="1.7"/></svg>
<div class="t " style="left:1894.50px;top:1795.29px;font-size:26px;line-height:26px;color:#000;">Sun</div>
<div class="arrowbtn" style="left:2516.5px;top:1788.5px;width:26.0px;height:41.0px"></div>
<svg class="abs" style="left:2524.5px;top:1799.0px" width="12" height="20" viewBox="0 0 12 20"><polygon points="1,1 11,10 1,19" fill="#000"/></svg>
<div class="t " style="left:1655.00px;top:1856.84px;font-size:25px;line-height:25px;color:#0000ff;letter-spacing:0.381px;text-decoration:underline;text-decoration-skip-ink:none;text-decoration-thickness:2.0px;text-underline-offset:1.0px;">Schedule</div>
<div class="combo" style="left:1889.2px;top:1842.5px;width:623.3px;height:45.5px;background:#c0c0c0;box-shadow:0 1.5px 0 #fff;"></div>
<div class="dd" style="left:2479.5px;top:1844.7px;width:31px;height:41.1px;opacity:.55;"></div>
<svg class="abs" style="left:2485.0px;top:1860.25px" width="20" height="12" viewBox="0 0 20 12"><path d="M2.5,2.5 L10,9 L17.5,2.5" fill="none" stroke="#b0b0b0" stroke-width="1.7"/></svg>
<div class="t " style="left:1894.50px;top:1851.59px;font-size:26px;line-height:26px;color:#9a9ba2;letter-spacing:-0.592px;text-shadow:1px 1px 0 #d8d8d8;">n.a.</div>
<div class="arrowbtn" style="left:2516.5px;top:1844.5px;width:26.0px;height:41.0px;background:#f3f3f3;border-color:#ececec"></div>
<svg class="abs" style="left:2522.5px;top:1856.0px" width="14" height="18" viewBox="0 0 14 18"><path d="M2,1.5 L9,9 L2,16.5 M2,5 L6,9 L2,13 M5,1.5 L12,9 L5,16.5" fill="none" stroke="#333" stroke-width="1.1"/></svg>
<div class="abs" style="left:2599px;top:1648.5px;width:250px;height:241px;box-sizing:border-box;background:#fff;border:1.6px solid #e2e2e2;"></div>
<svg class="abs" style="left:2600px;top:1649px" width="248" height="240" viewBox="2600 1649 248 240">
<defs><clipPath id="pvc"><circle cx="2723.5" cy="1769.5" r="121"/></clipPath><filter id="pvn" x="0" y="0" width="100%" height="100%" color-interpolation-filters="sRGB"><feTurbulence type="fractalNoise" baseFrequency="0.9" numOctaves="1" seed="3"/><feColorMatrix type="matrix" values="0 0 0 0 0.82  0 0 0 0 0.82  0 0 0 0 0.82  0.6 0 0 0 -0.15"/><feComposite in2="SourceGraphic" operator="in"/></filter></defs>
<g clip-path="url(#pvc)">
<rect x="2600" y="1649" width="248" height="240" fill="#d4ebf9"/>
<polygon points="2600,1649 2718,1649 2782,1708 2782,1889 2600,1889" fill="#e0e0e0"/>
<polygon points="2600,1649 2718,1649 2782,1708 2782,1889 2600,1889" fill="#e0e0e0" filter="url(#pvn)"/>
<path d="M2781.7,1710 V1878" stroke="#adadad" stroke-width="2.2"/>
<polygon points="2656,1671 2718,1649 2744,1650 2812,1706 2803,1713 2782,1710 2643,1680" fill="#e9e9e9"/>
<polygon points="2643,1680 2656,1671 2808,1701 2812,1706 2802,1714 2782,1711" fill="#cbcbcb"/>
<g stroke="#c2c2c2" stroke-width="1.1" fill="none"><path d="M2656,1671 L2718,1649 M2676,1660 L2750,1690 M2700,1653 L2775,1694 M2720,1650 L2795,1700 M2745,1651 L2805,1702 M2666,1666 L2690,1682 M2690,1657 L2716,1686 M2712,1652 L2740,1690 M2736,1660 L2762,1694 M2760,1672 L2786,1698"/></g>
<g stroke="#c0c0c0" stroke-width="1.3" fill="#e4e4e4"><polygon points="2674,1802 2736,1800 2737,1818 2670,1822"/><polygon points="2661,1823 2742,1817 2749,1824 2673,1834"/></g>
<rect x="2676" y="1803" width="50" height="13" fill="#d2d2d2"/>
<polygon points="2670.8,1720 2738.8,1725 2739.5,1794.2 2670.8,1796.7" fill="#ee8000" stroke="#111" stroke-width="1.6"/>
<polygon points="2663.3,1709 2671,1709.5 2671,1805 2663.3,1805" fill="#fff" stroke="#111" stroke-width="1.5"/>
<polygon points="2671,1710.5 2740,1717.5 2740.5,1725 2671,1720" fill="#fff" stroke="#111" stroke-width="1.5"/>
<polygon points="2671,1797 2741.5,1796 2741.5,1801.5 2671,1802.5" fill="#fff" stroke="#111" stroke-width="1.4"/>
<path d="M2663.3,1721 H2671 M2663.3,1797 H2671" stroke="#111" stroke-width="1.4"/>
</g>
<path id="pvarc" d="M2748,1877 A113,113 0 0 0 2838,1772" fill="none"/>
<text font-family='"Liberation Sans",sans-serif' font-size="6.2" fill="#a8a8a8"><textPath href="#pvarc">© ES-SO European Solar Shading Organization</textPath></text>
</svg>
<div class="abs" style="left:1635px;top:1952.3px;width:1250px;height:147.70000000000005px;box-sizing:border-box;border:2px solid #858585;box-shadow:1px 1px 0 #fff, inset 1px 1px 0 #fff;"></div>
<div class="abs" style="left:1644px;top:1940.3px;width:301px;height:24px;background:#f5f5f5"></div>
<div class="t " style="left:1651.50px;top:1941.80px;font-size:21.5px;line-height:21.5px;color:#3a1fd0;font-weight:bold;letter-spacing:0.738px;">External window shading</div>
<div class="t " style="left:1654.60px;top:1999.03px;font-size:23px;line-height:23px;color:#000;letter-spacing:-0.091px;">Type</div>
<div class="combo" style="left:1887.5px;top:1986.8px;width:625.0px;height:45.200000000000045px;background:#dbf1ff;box-shadow:0 1.5px 0 #fff;"></div>
<div class="dd" style="left:2479.5px;top:1989.0px;width:31px;height:40.80000000000005px;"></div>
<svg class="abs" style="left:2485.0px;top:2004.4px" width="20" height="12" viewBox="0 0 20 12"><path d="M2.5,2.5 L10,9 L17.5,2.5" fill="none" stroke="#555" stroke-width="1.7"/></svg>
<div class="t " style="left:1893.00px;top:1996.49px;font-size:26px;line-height:26px;color:#000;">No external shading</div>
<div class="t " style="left:2583.00px;top:1986.15px;font-size:20.5px;line-height:20.5px;color:#000;letter-spacing:0.375px;">[Should normally not be</div>
</body></html>
